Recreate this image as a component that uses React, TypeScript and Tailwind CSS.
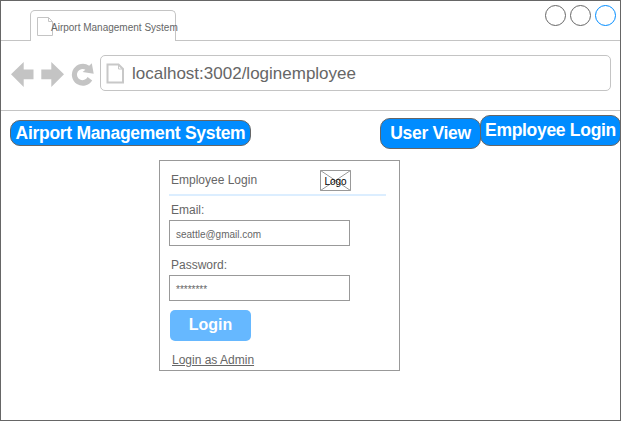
import type { ReactNode } from "react";

function PageIcon({ className, bold = false }: { className: string; bold?: boolean }) {
  return bold ? (
    <svg className={className} viewBox="0 0 19 21" fill="none" stroke="#c8c8c8">
      <path d="M1.5 1.5H12.5L17 6V19.5H1.5Z" strokeWidth="2" />
      <path d="M12.5 2V6H17" strokeWidth="1" />
    </svg>
  ) : (
    <svg className={className} viewBox="0 0 16 19" fill="none" stroke="#c4c4c4">
      <path d="M.5 .5H11.5L15.5 4.5V18.5H.5Z" />
      <path d="M11.5 .5V4.5H15.5" />
    </svg>
  );
}

function Pill({ className, children }: { className: string; children: ReactNode }) {
  return (
    <div
      className={`flex shrink-0 justify-center rounded-[10px] border border-[#666] bg-[#008cff] text-[17.5px] leading-[20px] font-bold tracking-[-0.3px] whitespace-nowrap text-white ${className}`}
    >
      {children}
    </div>
  );
}

function Field({ label, value }: { label: string; value: string }) {
  return (
    <div>
      <div className="h-[18px] pl-[2px] text-[12px] leading-[16px]">{label}</div>
      <div className="flex h-[26px] w-[181px] items-center border border-[#999] pt-[3px] pl-[6px] text-[10px]">
        {value}
      </div>
    </div>
  );
}

export default function App() {
  return (
    <div className="h-[421px] w-[621px] overflow-hidden border border-[#666] bg-white font-['Liberation_Sans',Arial,sans-serif] text-[#666]">
      <div className="flex h-[40px] items-end">
        <div className="h-px w-[29px] bg-[#c4c4c4]" />
        <div className="flex h-[31px] w-[146px] rounded-t-[5px] border border-b-0 border-[#c4c4c4] pt-[6px] pl-[6px]">
          <PageIcon className="h-[19px] w-[16px] shrink-0" />
          <span className="-ml-[2px] pt-[3px] text-[10px] leading-[16px] whitespace-nowrap">
            Airport Management System
          </span>
        </div>
        <div className="flex h-full flex-1 items-start justify-end gap-[4px] border-b border-[#c4c4c4] pt-[4px] pr-[4px]">
          <div className="size-[21px] rounded-full border border-[#666]" />
          <div className="size-[21px] rounded-full border border-[#666]" />
          <div className="size-[21px] rounded-full border border-[#008cff]" />
        </div>
      </div>

      <div className="flex h-[70px] border-b border-[#c4c4c4] pt-[14px] pl-[10px]">
        <svg className="h-[36px] w-[89px] shrink-0" viewBox="11 55 89 36" fill="#c4c4c4">
          <path d="M11 74.3 23.7 62V69.5H33.5V79.3H23.7V87Z" />
          <path d="M64 74.3 51.3 62V69.5H41.3V79.3H51.3V87Z" />
          <path d="M91.8 63.3 93.7 73.8 82.6 71.9 85.4 69.7A5.6 5.6 0 1 0 87.6 77L92.2 80.6A11 11 0 1 1 89.2 65.7Z" />
        </svg>
        <div className="flex h-[36px] w-[511px] items-center rounded-[5px] border border-[#c4c4c4] pl-[5px]">
          <PageIcon className="h-[21px] w-[19px] shrink-0" bold />
          <span className="pt-[2px] pl-[7px] text-[17px] leading-[20px]">localhost:3002/loginemployee</span>
        </div>
      </div>

      <div className="flex h-[49px] items-start pt-[4px] pl-[9px]">
        <Pill className="mt-[5px] h-[26px] w-[241px] pt-[2px]">Airport Management System</Pill>
        <Pill className="mt-[3px] ml-[129px] h-[31px] w-[101px] pt-[4px]">User View</Pill>
        <Pill className="-ml-px h-[31px] w-[141px] pt-[4px]">Employee Login</Pill>
      </div>

      <div className="ml-[158px] h-[211px] w-[241px] border border-[#999] pl-[9px]">
        <div className="flex h-[33px] justify-between pr-[48px]">
          <span className="pt-[11px] pl-[2px] text-[12px] leading-[16px]">Employee Login</span>
          <div className="mt-[9px] h-[21px] w-[31px] bg-white">
            <svg className="size-full" viewBox="0 0 31 21" fill="none" stroke="#999">
              <path d="M.5 .5H30.5V20.5H.5ZM.5 .5 30.5 20.5M30.5 .5 .5 20.5" />
              <text x="15.5" y="15" textAnchor="middle" fontSize="10" fill="#000" stroke="none">
                Logo
              </text>
            </svg>
          </div>
        </div>
        <div className="h-[2px] w-[217px] bg-[#dceeff]" />
        <div className="pt-[6px]">
          <Field label="Email:" value="seattle@gmail.com" />
        </div>
        <div className="pt-[11px]">
          <Field label="Password:" value="********" />
        </div>
        <button className="mt-[9px] ml-px flex h-[31px] w-[81px] justify-center rounded-[5px] bg-[#66b8ff] pt-[5px] text-[16px] leading-[20px] font-bold text-white">
          Login
        </button>
        <a className="mt-[11px] ml-[3px] block text-[12px] leading-[16px] underline">Login as Admin</a>
      </div>
    </div>
  );
}
